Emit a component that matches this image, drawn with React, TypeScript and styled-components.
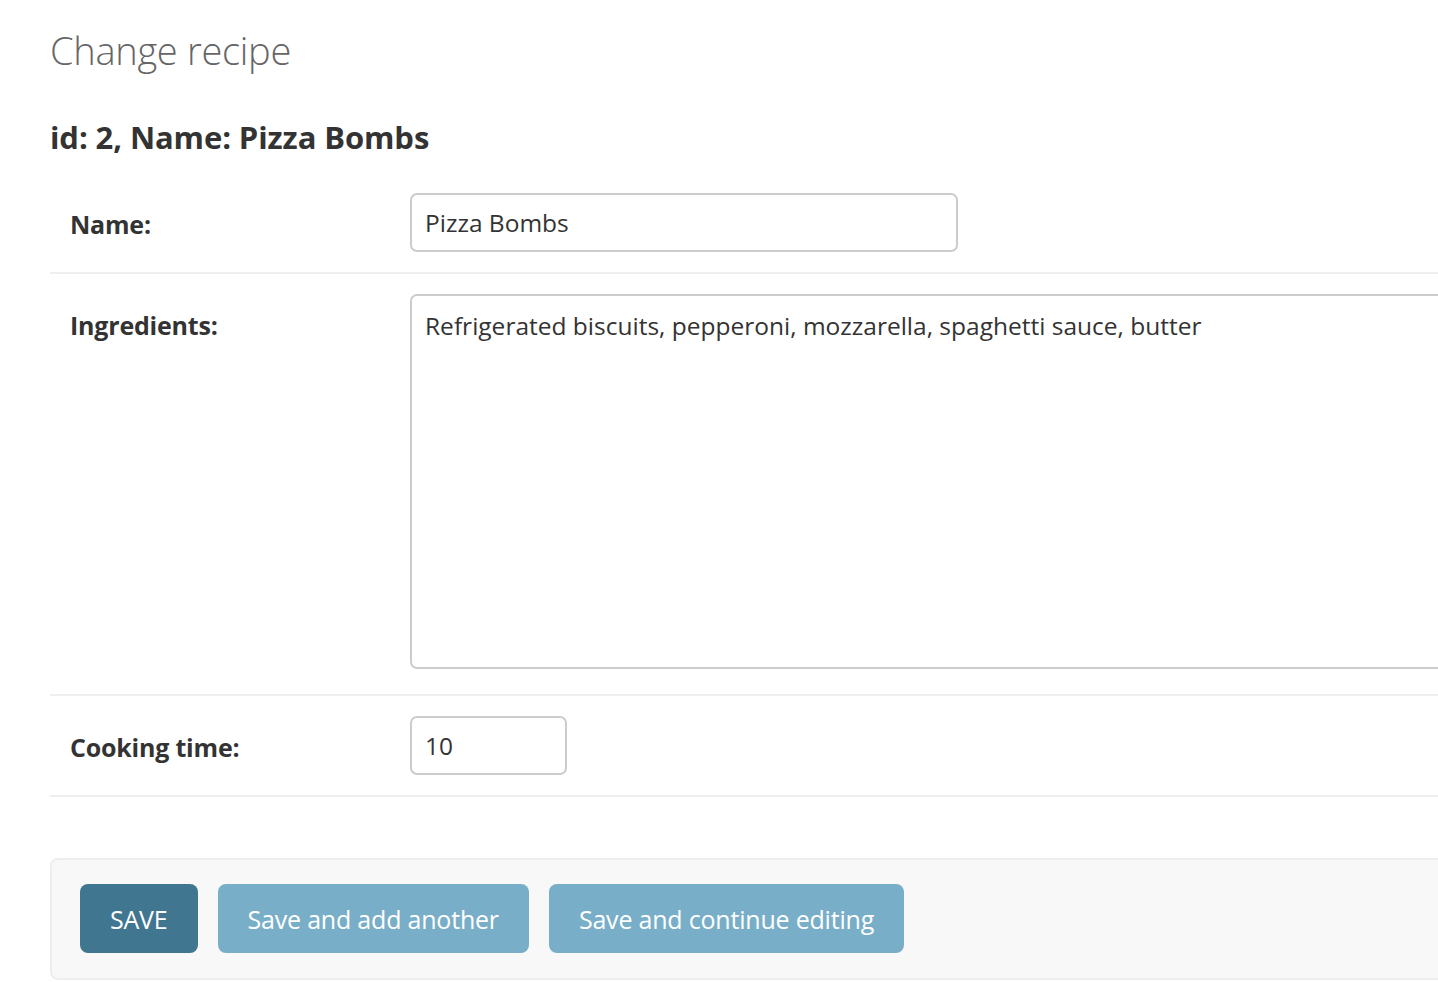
import React from "react";
import styled, { createGlobalStyle } from "styled-components";

const Global = createGlobalStyle`
  html, body { margin: 0; padding: 0; background: #fff; overflow: hidden; }
  body { font-family: "Open Sans", "Noto Sans", sans-serif; color: #333; }
`;

const Content = styled.main`
  padding: 24px 0 0 50px;
  width: 1388px;
`;

const Title = styled.h1`
  margin: 0 0 41px;
  font-size: 38px;
  font-weight: 300;
  color: #666;
  line-height: 52px;
  letter-spacing: -0.3px;
`;

const ObjectHeading = styled.h2`
  margin: 0 0 16px;
  font-size: 31px;
  font-weight: 700;
  color: #333;
  line-height: 40px;
  letter-spacing: -0.1px;
`;

const FormRow = styled.div`
  display: flex;
  align-items: flex-start;
  padding: 20px;
  border-bottom: 2px solid #eee;
`;

const Label = styled.label`
  flex: 0 0 340px;
  font-size: 25px;
  font-weight: 700;
  color: #333;
  line-height: 34px;
  padding-top: 14px;
  letter-spacing: -0.2px;
`;

const Input = styled.input<{ $w: number }>`
  box-sizing: border-box;
  width: ${(p) => p.$w}px;
  height: 59px;
  padding: 0 13px;
  border: 2px solid #ccc;
  border-radius: 7px;
  font-family: inherit;
  font-size: 24.5px;
  color: #333;
  background: #fff;
  outline: none;
`;

const TextArea = styled.textarea`
  box-sizing: border-box;
  flex: 0 0 1240px;
  width: 1240px;
  height: 375px;
  margin-bottom: 5px;
  padding: 13px 13px;
  border: 2px solid #ccc;
  border-radius: 7px;
  font-family: inherit;
  font-size: 24.5px;
  line-height: 34px;
  color: #333;
  resize: none;
  outline: none;
`;

const SubmitRow = styled.div`
  display: flex;
  gap: 20px;
  margin: 61px -20px 0 0;
  padding: 24px 28px 25px;
  background: #f8f8f8;
  border: 2px solid #eee;
  border-radius: 8px;
`;

const Button = styled.button<{ $primary?: boolean }>`
  height: 69px;
  padding: 0 30px;
  border: none;
  border-radius: 8px;
  background: ${(p) => (p.$primary ? "#417690" : "#79aec8")};
  color: #fff;
  font-family: inherit;
  font-size: 25px;
  letter-spacing: -0.2px;
  cursor: pointer;
`;

export default function App() {
  return (
    <>
      <Global />
      <Content>
        <Title>Change recipe</Title>
        <ObjectHeading>id: 2, Name: Pizza Bombs</ObjectHeading>
        <form>
          <FormRow>
            <Label>Name:</Label>
            <Input $w={548} defaultValue="Pizza Bombs" />
          </FormRow>
          <FormRow>
            <Label>Ingredients:</Label>
            <TextArea defaultValue="Refrigerated biscuits, pepperoni, mozzarella, spaghetti sauce, butter" />
          </FormRow>
          <FormRow>
            <Label>Cooking time:</Label>
            <Input $w={157} defaultValue="10" />
          </FormRow>
          <SubmitRow>
            <Button type="button" $primary>SAVE</Button>
            <Button type="button">Save and add another</Button>
            <Button type="button">Save and continue editing</Button>
          </SubmitRow>
        </form>
      </Content>
    </>
  );
}
